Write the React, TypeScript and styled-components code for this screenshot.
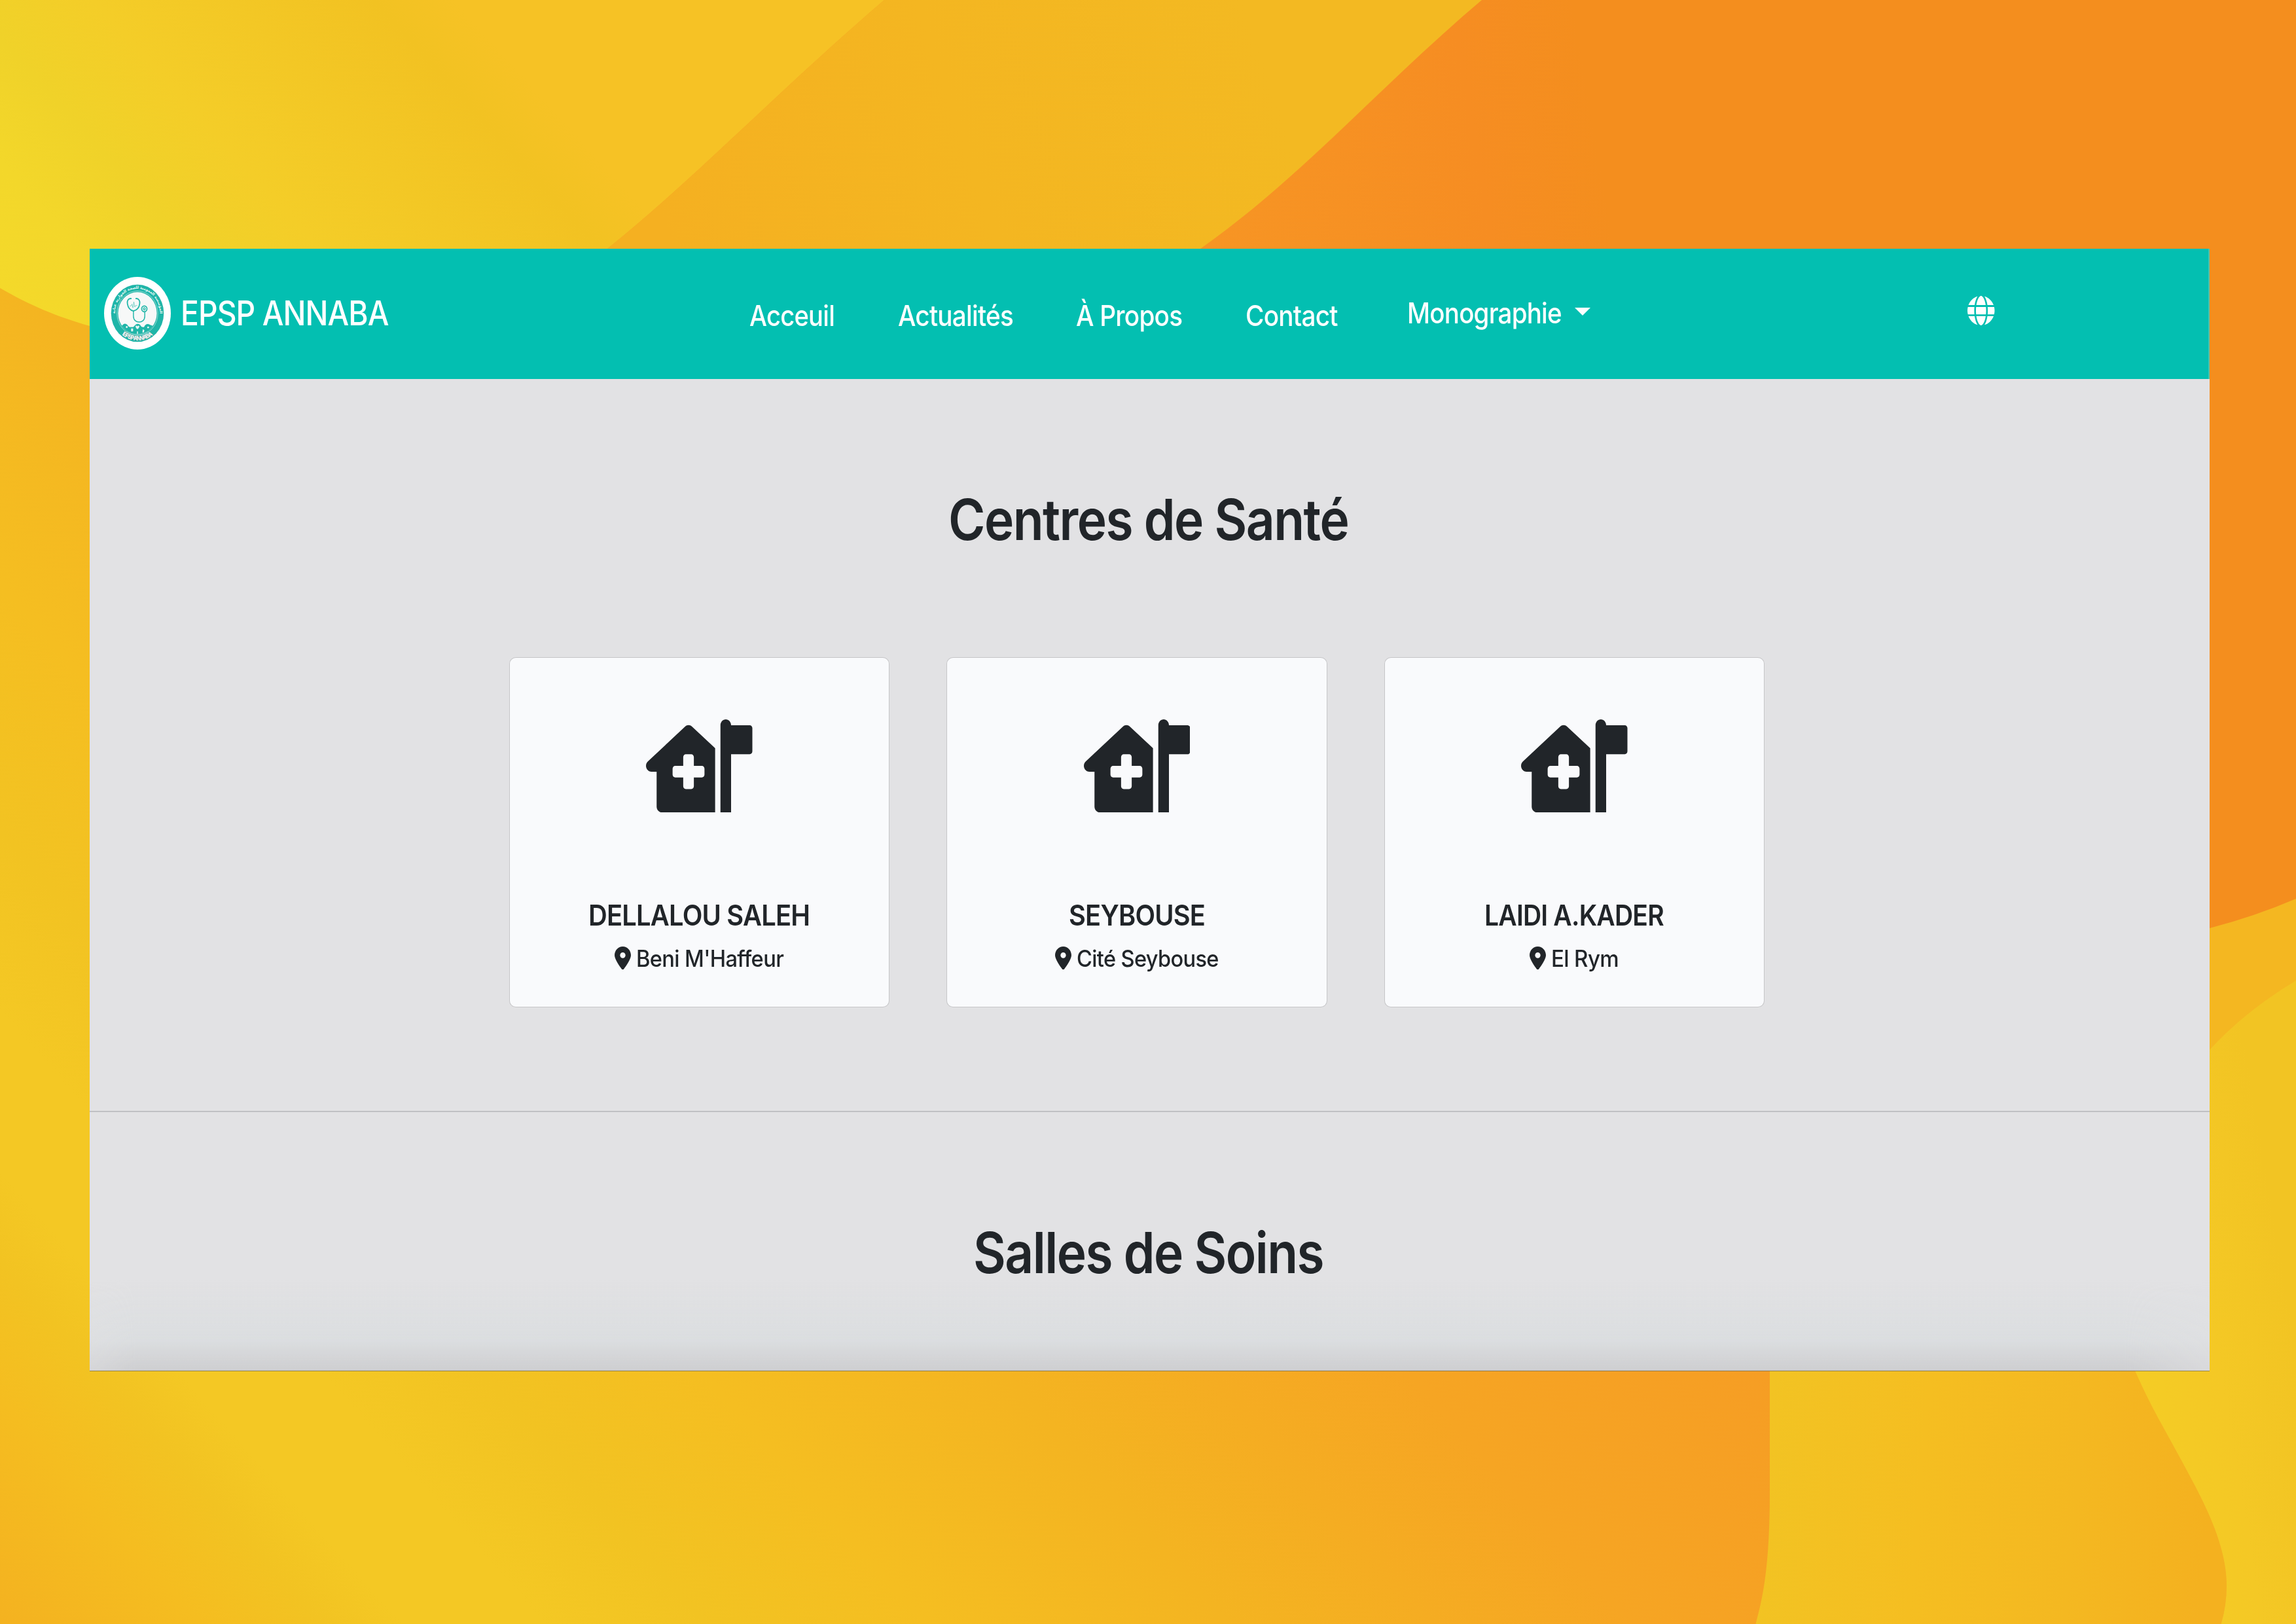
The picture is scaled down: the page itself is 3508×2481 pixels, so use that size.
import React, { useLayoutEffect, useRef, useState } from "react";
import styled, { createGlobalStyle } from "styled-components";
import { FaGlobe, FaHouseMedicalFlag, FaLocationDot } from "react-icons/fa6";

const GlobalStyle = createGlobalStyle`
  html, body {
    margin: 0;
    padding: 0;
  }
  body {
    width: 3508px;
    height: 2481px;
    overflow: hidden;
    font-family: Inter, "Liberation Sans", sans-serif;
  }
`;

const Page = styled.div`
  position: relative;
  box-sizing: border-box;
  width: 3508px;
  height: 2481px;
  padding: 380px 132px 387px 137px;
  overflow: hidden;
  background: #f4c425;
`;

const Backdrop = styled.svg`
  position: absolute;
  inset: 0;
  width: 100%;
  height: 100%;
`;

const Window = styled.div`
  position: relative;
  display: flex;
  flex-direction: column;
  width: 3239px;
  height: 1714px;
  overflow: hidden;
  background: #e2e2e4;
  box-shadow: 0 1px 0 rgba(120, 110, 80, 0.7);
`;

const Header = styled.header`
  display: flex;
  align-items: center;
  flex: none;
  box-sizing: border-box;
  height: 199px;
  background: #03bfb1;
  color: #fff;
  border-right: 2px solid #45c3b4;
`;

const Brand = styled.a`
  display: flex;
  align-items: center;
  gap: 15px;
  width: 1008px;
  box-sizing: border-box;
  padding-left: 22px;
`;

const Logo = styled.svg`
  display: block;
  width: 102px;
  height: 111px;
  margin-bottom: 2px;
`;

const Nav = styled.nav`
  display: flex;
  align-items: center;
  gap: 96.5px;
  padding-top: 5px;
`;

const MenuButton = styled.div`
  display: flex;
  align-items: center;
  gap: 20px;
  margin: 0 0 2px 106px;
`;

const Caret = styled.span`
  width: 0;
  height: 0;
  margin-bottom: 4px;
  border: 12px solid transparent;
  border-top-color: #fff;
  border-bottom: 0;
`;

const LanguageIcon = styled(FaGlobe)`
  display: block;
  width: 41.5px;
  height: 45px;
  margin: 0 0 11px 576.5px;
`;

const Label = styled.span<{ $size: number; $weight: number; $width: number }>`
  display: block;
  flex: none;
  width: ${(p) => p.$width}px;
  font-size: ${(p) => p.$size}px;
  font-weight: ${(p) => p.$weight};
  line-height: 1.2;
  letter-spacing: -0.02em;
  white-space: nowrap;
`;

const LabelInk = styled.span`
  display: inline-block;
  transform-origin: 0 50%;
`;

type FitProps = { children: string; width: number; size: number; weight?: number };

/* Condenses a line of text so that it spans the given width. */
function Fit({ children, width, size, weight = 500 }: FitProps) {
  const ref = useRef<HTMLSpanElement>(null);
  const [ratio, setRatio] = useState(1);
  useLayoutEffect(() => {
    if (ref.current) setRatio(width / ref.current.offsetWidth);
  }, [width, size, weight, children]);
  return (
    <Label $size={size} $weight={weight} $width={width}>
      <LabelInk ref={ref} style={{ transform: `scaleX(${ratio})` }}>
        {children}
      </LabelInk>
    </Label>
  );
}

const Section = styled.section<{ $height?: number }>`
  display: flex;
  flex-direction: column;
  box-sizing: border-box;
  flex: none;
  height: ${(p) => (p.$height ? `${p.$height}px` : "auto")};
  padding-top: 162px;
  color: #212529;
  border-bottom: ${(p) => (p.$height ? "2px solid #bfc0c3" : "0")};
`;

const Title = styled.h1`
  display: flex;
  justify-content: center;
  margin: 0;
  padding-right: 5px;
  height: 106px;
  align-items: center;
`;

const Cards = styled.div`
  display: flex;
  gap: 87px;
  margin: 157px 0 0 640.5px;
`;

const CardBox = styled.article`
  display: flex;
  flex-direction: column;
  align-items: center;
  box-sizing: border-box;
  width: 581.5px;
  height: 535px;
  padding-top: 93.5px;
  background: #f9fafc;
  background-clip: padding-box;
  border: 1px solid rgba(0, 0, 0, 0.12);
  border-radius: 10px;
`;

const HouseIcon = styled(FaHouseMedicalFlag)`
  display: block;
  width: 162.5px;
  height: 142px;
  margin-bottom: 131.5px;
`;

const Place = styled.div`
  display: flex;
  align-items: center;
  gap: 8px;
  margin-top: 18.5px;
`;

const PinIcon = styled(FaLocationDot)`
  display: block;
  width: 25px;
  height: 35.5px;
  margin-bottom: 2px;
`;

const BottomShade = styled.div`
  position: absolute;
  left: 0;
  right: 0;
  bottom: 0;
  height: 140px;
  background: linear-gradient(
    to bottom,
    rgba(200, 212, 214, 0) 0%,
    rgba(200, 212, 214, 0.14) 40%,
    rgba(200, 210, 212, 0.26) 68%,
    rgba(182, 185, 188, 0.3) 84%,
    rgba(172, 174, 177, 0.36) 99%,
    rgba(150, 150, 150, 0.45) 100%
  );
  mask-image: linear-gradient(to right, rgba(0, 0, 0, 0.6), #000 70px, #000 calc(100% - 130px), rgba(0, 0, 0, 0.45));
`;

const TEAL = "#1fb5a8";

function Emblem() {
  return (
    <Logo viewBox="0 0 100 100" preserveAspectRatio="none">
      <defs>
        <path id="arc-top" d="M17.4 58 A33.600 33.600 0 1 1 82.6 58" />
        <path id="arc-bottom" d="M17 68 A37.8 37.8 0 0 0 83 68" />
        <clipPath id="disc">
          <circle cx="50" cy="50" r="29" />
        </clipPath>
      </defs>
      <circle cx="50" cy="50" r="50" fill="#fff" />
      <circle cx="50" cy="50" r="39.5" fill={TEAL} />
      <circle cx="50" cy="50" r="30.6" fill="none" stroke="#a6dfd9" strokeWidth="0.8" />
      <circle cx="50" cy="50" r="29" fill="#f7f8f8" />
      <g clipPath="url(#disc)" fill={TEAL}>
        <path d="M18 70 Q26 68 28 66 Q31 63 35 66 Q37 70 41 69 Q44 70 46 67 Q49 63 54 66 Q56 70 60 69 Q62 64 67 65 Q72 68 82 68 V82 H18 Z" />
      </g>
      <g fill="#e6f5f3">
        <circle cx="34" cy="69" r="1.4" />
        <path d="M40.500 71h3v4h-3z" />
        <path d="M47 67.500q1.500-1 3 .5q1.500-1.500 3-.5q0 2.500-3 4.500q-3-2-3-4.500z" />
        <path d="M49.300 75h1.500v3.500h-1.500z" />
        <path d="M58 72l2.500 1.500-1 3h-2z" />
        <circle cx="66" cy="69.500" r="1.300" />
      </g>
      <path d="M33 75 Q50 84 67 75" fill="none" stroke="#a6dfd9" strokeWidth="0.700" />
      <g fill="none" stroke={TEAL} strokeLinecap="round">
        <path strokeWidth="1.700" d="M40.500 29.800C36 29.500 34.300 33 35 37C36 43 40 46 44 47C48 46 52.500 43 53.300 37C54 33 52 29.500 47.800 29.800" />
        <path strokeWidth="1.400" d="M44 47V54C44 65 61 65 61 54V49" />
        <circle cx="60.300" cy="44" r="4" strokeWidth="1.600" />
        <circle cx="60.300" cy="44" r="1.500" strokeWidth="1.200" />
        <path strokeWidth="0.500" d="M38.500 40h2l1.200-2.500 1.500 5 1.400-8 1.400 7 1-2h2.500" />
      </g>
      <text fontSize="5.400" fontWeight="700" fill="#eafaf8" textAnchor="middle" fontFamily="'DejaVu Sans', sans-serif">
        <textPath href="#arc-top" startOffset="50%">
          المؤسسة العمومية للصحة الجوارية عنابة
        </textPath>
      </text>
      <text
        fontSize="8.500"
        fontWeight="700"
        fill="#fff"
        stroke="#7fa9a6"
        strokeWidth="0.900"
        paintOrder="stroke"
        textAnchor="middle"
        fontFamily="'Liberation Sans Narrow', 'Liberation Sans', sans-serif"
      >
        <textPath href="#arc-bottom" startOffset="50%" textLength="49">
          EPSP ANNABA
        </textPath>
      </text>
    </Logo>
  );
}

function Waves() {
  return (
    <Backdrop viewBox="0 0 3508 2481" preserveAspectRatio="none">
      <defs>
        <linearGradient id="lower" gradientUnits="userSpaceOnUse" x1="0" y1="2481" x2="1718" y2="951.500">
          <stop offset="0" stopColor="#f4b220" />
          <stop offset="0.100" stopColor="#f5bd20" />
          <stop offset="0.160" stopColor="#f2c322" />
          <stop offset="0.200" stopColor="#f4c824" />
          <stop offset="0.270" stopColor="#f4c824" />
          <stop offset="0.350" stopColor="#f2c322" />
          <stop offset="0.460" stopColor="#f5be21" />
          <stop offset="0.610" stopColor="#f4b421" />
          <stop offset="0.810" stopColor="#f6a523" />
          <stop offset="1" stopColor="#f69d24" />
        </linearGradient>
        <linearGradient id="corner" gradientUnits="userSpaceOnUse" x1="0" y1="446" x2="836" y2="-314">
          <stop offset="0" stopColor="#f4d92a" />
          <stop offset="0.120" stopColor="#f3d72a" />
          <stop offset="0.230" stopColor="#f0d229" />
          <stop offset="0.360" stopColor="#f4cd28" />
          <stop offset="0.640" stopColor="#f2c222" />
          <stop offset="0.720" stopColor="#f6c225" />
          <stop offset="1" stopColor="#f6c225" />
        </linearGradient>
        <linearGradient id="middle" gradientUnits="userSpaceOnUse" x1="1000" y1="300" x2="1900" y2="0">
          <stop offset="0" stopColor="#f5b021" />
          <stop offset="0.500" stopColor="#f4b621" />
          <stop offset="1" stopColor="#f3b922" />
        </linearGradient>
        <linearGradient id="orange" gradientUnits="userSpaceOnUse" x1="1850" y1="380" x2="2450" y2="280">
          <stop offset="0" stopColor="#f79524" />
          <stop offset="0.700" stopColor="#f68d22" />
          <stop offset="1" stopColor="#f48e1e" />
        </linearGradient>
        <linearGradient id="cove" gradientUnits="userSpaceOnUse" x1="2700" y1="2200" x2="3380" y2="2260">
          <stop offset="0" stopColor="#f2c323" />
          <stop offset="0.350" stopColor="#f5be21" />
          <stop offset="0.700" stopColor="#f4b821" />
          <stop offset="1" stopColor="#f4b11f" />
        </linearGradient>
        <linearGradient id="shore" gradientUnits="userSpaceOnUse" x1="3270" y1="2100" x2="3508" y2="2060">
          <stop offset="0" stopColor="#f4cc25" />
          <stop offset="0.500" stopColor="#f4c825" />
          <stop offset="1" stopColor="#f2c423" />
        </linearGradient>
      </defs>
      <rect width="3508" height="2481" fill="url(#lower)" />
      <path fill="url(#corner)" d="M0 0H1351C1190 138 1070 265 928 380V560H300L137 498C85 483 45 466 0 440Z" />
      <path fill="url(#middle)" d="M1351 0H2300V420H880L928 380C1070 265 1190 138 1351 0Z" />
      <path fill="#f4b721" d="M3300 1300H3508V1700H3300Z" />
      <path fill="url(#orange)" d="M2264 0H3508V1373Q3445 1400 3376 1418H1780L1834 380C1990 270 2110 130 2264 0Z" />
      <path
        fill="url(#cove)"
        d="M2704 2050H3300V2481H2682.600C2692 2445 2704 2400 2704 2279ZM3240 2050C3270 2120 3300 2170 3329 2224C3362 2285 3402 2355 3402 2422Q3402 2452 3393.600 2481H3240Z"
      />
      <path
        fill="url(#shore)"
        d="M3508 1498Q3430 1545 3376 1604L3200 1800V1990L3262 2094C3285 2146 3305 2180 3329 2224C3362 2285 3402 2355 3402 2422Q3402 2452 3393.600 2481H3508Z"
      />
    </Backdrop>
  );
}

const links = [
  { text: "Acceuil", width: 130 },
  { text: "Actualités", width: 176 },
  { text: "À Propos", width: 162 },
  { text: "Contact", width: 141 },
];

const centres = [
  { name: "DELLALOU SALEH", nameWidth: 338, place: "Beni M'Haffeur", placeWidth: 225 },
  { name: "SEYBOUSE", nameWidth: 208, place: "Cité Seybouse", placeWidth: 217 },
  { name: "LAIDI A.KADER", nameWidth: 274, place: "El Rym", placeWidth: 103 },
];

export default function App() {
  return (
    <Page>
      <GlobalStyle />
      <Waves />
      <Window>
        <Header>
          <Brand>
            <Emblem />
            <Fit size={52} weight={450} width={318}>EPSP ANNABA</Fit>
          </Brand>
          <Nav>
            {links.map((link) => (
              <Fit key={link.text} size={44} width={link.width}>{link.text}</Fit>
            ))}
          </Nav>
          <MenuButton>
            <Fit size={44} width={236}>Monographie</Fit>
            <Caret />
          </MenuButton>
          <LanguageIcon preserveAspectRatio="none" />
        </Header>
        <Section $height={1120}>
          <Title>
            <Fit size={87} weight={570} width={611}>Centres de Santé</Fit>
          </Title>
          <Cards>
            {centres.map((c) => (
              <CardBox key={c.name}>
                <HouseIcon preserveAspectRatio="none" />
                <Fit size={44} weight={560} width={c.nameWidth}>{c.name}</Fit>
                <Place>
                  <PinIcon preserveAspectRatio="none" />
                  <Fit size={35} width={c.placeWidth}>{c.place}</Fit>
                </Place>
              </CardBox>
            ))}
          </Cards>
        </Section>
        <Section>
          <Title>
            <Fit size={87} weight={570} width={535}>Salles de Soins</Fit>
          </Title>
        </Section>
        <BottomShade />
      </Window>
    </Page>
  );
}
